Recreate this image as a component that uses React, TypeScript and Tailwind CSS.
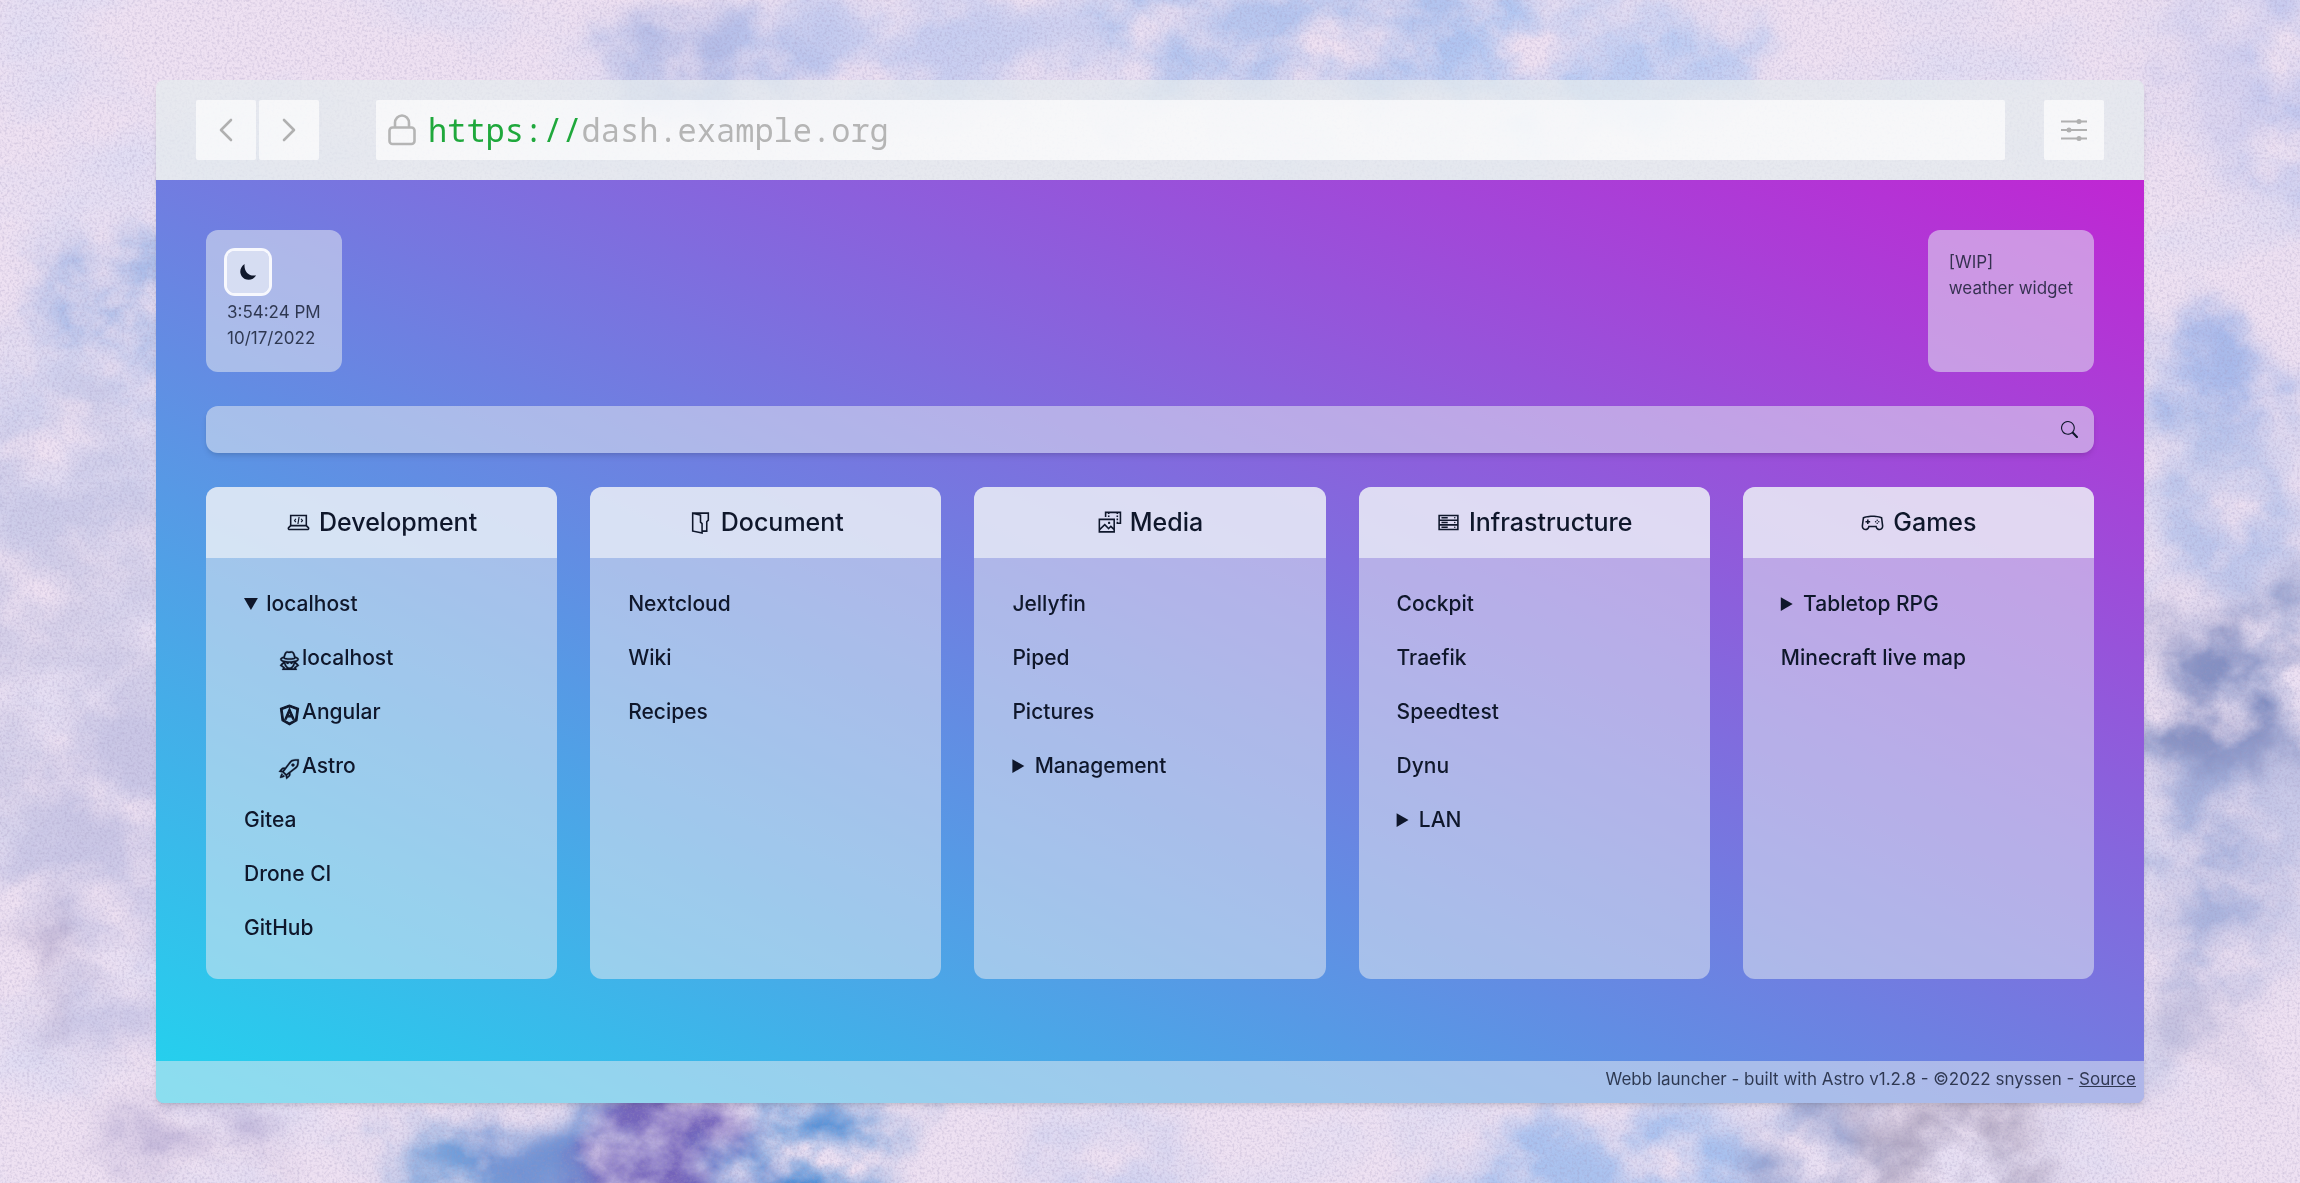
import type { ReactNode } from 'react';
import type { IconType } from 'react-icons';
import {
  LiaAngular,
  LiaFolderOpen,
  LiaGamepadSolid,
  LiaLaptopCodeSolid,
  LiaPhotoVideoSolid,
  LiaRocketSolid,
  LiaServerSolid,
  LiaUserSecretSolid,
} from 'react-icons/lia';
import { BsSearch } from 'react-icons/bs';

type Entry = { label: string; icon?: IconType; iconStroke?: number; open?: boolean; children?: Entry[] };
type Category = { title: string; icon: IconType; entries: Entry[] };

const categories: Category[] = [
  {
    title: 'Development',
    icon: LiaLaptopCodeSolid,
    entries: [
      {
        label: 'localhost',
        open: true,
        children: [
          { label: 'localhost', icon: LiaUserSecretSolid, iconStroke: 0.3 },
          { label: 'Angular', icon: LiaAngular, iconStroke: 1.4 },
          { label: 'Astro', icon: LiaRocketSolid, iconStroke: 0.3 },
        ],
      },
      { label: 'Gitea' },
      { label: 'Drone CI' },
      { label: 'GitHub' },
    ],
  },
  {
    title: 'Document',
    icon: LiaFolderOpen,
    entries: [{ label: 'Nextcloud' }, { label: 'Wiki' }, { label: 'Recipes' }],
  },
  {
    title: 'Media',
    icon: LiaPhotoVideoSolid,
    entries: [
      { label: 'Jellyfin' },
      { label: 'Piped' },
      { label: 'Pictures' },
      { label: 'Management', children: [] },
    ],
  },
  {
    title: 'Infrastructure',
    icon: LiaServerSolid,
    entries: [
      { label: 'Cockpit' },
      { label: 'Traefik' },
      { label: 'Speedtest' },
      { label: 'Dynu' },
      { label: 'LAN', children: [] },
    ],
  },
  {
    title: 'Games',
    icon: LiaGamepadSolid,
    entries: [{ label: 'Tabletop RPG', children: [] }, { label: 'Minecraft live map' }],
  },
];

/* Watercolour wallpaper: [cx, cy, rx, ry, colour, opacity] per brush stroke. */
const strokes: [number, number, number, number, string, number][] = [
  [730, 60, 110, 50, '#93a8e0', 0.65],
  [900, 50, 180, 60, '#bcc8f0', 0.7],
  [1190, 20, 110, 90, '#a6bdee', 0.75],
  [1410, 10, 130, 80, '#a4bdee', 0.8],
  [1580, 60, 180, 60, '#aec5f2', 0.8],
  [2240, 60, 90, 110, '#cbcbef', 0.6],
  [2310, 100, 50, 150, '#b9c3ee', 0.7],
  [120, 290, 60, 40, '#8fade5', 0.95],
  [145, 350, 40, 60, '#9ab4e6', 0.9],
  [70, 440, 130, 110, '#c9ceed', 0.8],
  [60, 640, 150, 240, '#cac9e6', 0.7],
  [120, 880, 100, 180, '#c4c3e4', 0.75],
  [50, 955, 24, 34, '#8d80ac', 0.8],
  [2210, 370, 60, 50, '#93aee8', 0.8],
  [2220, 500, 80, 100, '#b0bfea', 0.8],
  [2220, 700, 80, 80, '#6d7db6', 0.8],
  [2290, 640, 50, 60, '#7285be', 0.75],
  [2200, 860, 60, 120, '#97a8d8', 0.8],
  [2300, 840, 40, 140, '#b8bfe4', 0.7],
  [2180, 1030, 30, 60, '#989fca', 0.6],
  [190, 1130, 80, 30, '#998fc2', 0.7],
  [450, 1180, 70, 60, '#6a9ad8', 0.95],
  [570, 1170, 90, 80, '#7293d4', 1],
  [680, 1170, 90, 90, '#7463bb', 1],
  [810, 1170, 80, 90, '#528fd6', 1],
  [1100, 1170, 80, 50, '#bfcaf0', 0.7],
  [1640, 1170, 190, 65, '#9ebcee', 0.85],
  [1810, 1150, 60, 70, '#8f9ccc', 0.8],
  [1950, 1170, 100, 80, '#a299b5', 0.85],
];

function Wallpaper() {
  return (
    <svg
      aria-hidden="true"
      className="absolute inset-0 -z-10 size-full"
      viewBox="0 0 2300 1183"
      preserveAspectRatio="xMidYMid slice"
    >
      <defs>
        <filter
          id="brush"
          x="-200"
          y="-200"
          width="2700"
          height="1600"
          filterUnits="userSpaceOnUse"
          colorInterpolationFilters="sRGB"
        >
          <feGaussianBlur stdDeviation="24" result="soft" />
          <feTurbulence type="fractalNoise" baseFrequency="0.014" numOctaves="6" seed="7" result="n" />
          <feDisplacementMap in="soft" in2="n" scale="110" xChannelSelector="R" yChannelSelector="G" result="paint" />
          <feTurbulence type="fractalNoise" baseFrequency="0.012 0.015" numOctaves="7" seed="21" />
          <feColorMatrix values="0 0 0 0 0  0 0 0 0 0  0 0 0 0 0  2.6 0 0 0 -0.55" result="dry" />
          <feComposite in="paint" in2="dry" operator="in" />
        </filter>
        <filter id="grain" x="0" y="0" width="2300" height="1183" filterUnits="userSpaceOnUse">
          <feTurbulence type="fractalNoise" baseFrequency="0.4" numOctaves="2" seed="3" />
          <feColorMatrix values="0 0 0 0 0.35  0 0 0 0 0.3  0 0 0 0 0.5  1.8 0 0 0 -0.8" />
        </filter>
        <filter id="wash" x="0" y="0" width="2300" height="1183" filterUnits="userSpaceOnUse">
          <feTurbulence type="fractalNoise" baseFrequency="0.006 0.009" numOctaves="6" seed="11" />
          <feColorMatrix values="0 0 0 0 0.6  0 0 0 0 0.68  0 0 0 0 0.92  3 0 0 0 -1.4" />
        </filter>
      </defs>
      <rect width="2300" height="1183" fill="#eee1f2" />
      <rect width="2300" height="1183" filter="url(#wash)" opacity="0.35" />
      <g filter="url(#brush)">
        {strokes.map(([cx, cy, rx, ry, fill, opacity]) => (
          <ellipse key={`${cx}-${cy}`} cx={cx} cy={cy} rx={rx} ry={ry} fill={fill} opacity={opacity} />
        ))}
      </g>
      <rect width="2300" height="1183" filter="url(#grain)" opacity="0.45" />
    </svg>
  );
}

function Chevron({ d }: { d: string }) {
  return (
    <svg viewBox="0 0 24 24" className="size-6" fill="none" stroke="currentColor" strokeWidth="2.6">
      <path d={d} strokeLinecap="round" strokeLinejoin="round" />
    </svg>
  );
}

function ChromeButton({ label, children }: { label: string; children: ReactNode }) {
  return (
    <button
      type="button"
      aria-label={label}
      className="flex size-15 items-center justify-center rounded-xs bg-white/65 text-[#b0b0b0]"
    >
      {children}
    </button>
  );
}

function BrowserBar() {
  return (
    <header className="flex items-center bg-[#e4ebed]/75 px-10 py-5">
      <nav aria-label="History" className="mr-[57px] flex gap-[3px]">
        <ChromeButton label="Back">
          <Chevron d="M17 2 L7 12 L17 22" />
        </ChromeButton>
        <ChromeButton label="Forward">
          <Chevron d="M7 2 L17 12 L7 22" />
        </ChromeButton>
      </nav>
      <div className="flex h-15 flex-1 items-center rounded-xs bg-white/65 px-3 font-['Noto_Sans_Mono','DejaVu_Sans_Mono',monospace] text-[32px] leading-10 text-[#b5b5b5]">
        <svg viewBox="0 0 28 32" className="mr-3 h-8 w-7" fill="none" stroke="currentColor" strokeWidth="2.6">
          <rect x="1.5" y="13.5" width="25" height="16.5" rx="3" />
          <path d="M7 13.500 V9 a7 7.500 0 0 1 14 0 V13.500" />
        </svg>
        <span className="text-[#1fa83c]">https://</span>
        <span>dash.example.org</span>
      </div>
      <div className="ml-[39px]">
        <ChromeButton label="Settings">
          <svg viewBox="0 0 26 22" className="h-[22px] w-[26px]" stroke="currentColor" strokeWidth="2">
            <path d="M0 2.500H26M0 11H26M0 19.500H26" />
            <g fill="currentColor" stroke="none">
              <circle cx="18" cy="2.500" r="2.500" />
              <circle cx="8" cy="11" r="2.500" />
              <circle cx="18" cy="19.500" r="2.500" />
            </g>
          </svg>
        </ChromeButton>
      </div>
    </header>
  );
}

function MoonIcon() {
  return (
    <svg viewBox="0 0 16 16" className="size-4" fill="currentColor">
      <path d="M4.600 0 C0.300 2.800 -1 8.200 1.700 12.200 C5 17 13 17.200 16 11.300 C9.500 13 3.600 7.500 4.600 0 Z" />
    </svg>
  );
}

function EntryLink({ entry }: { entry: Entry }) {
  const Icon = entry.icon;
  return (
    <a href="#" className="flex items-center">
      {Icon && <Icon className="mt-1 size-[25px]" strokeWidth={entry.iconStroke} />}
      {entry.label}
    </a>
  );
}

function EntryItem({ entry }: { entry: Entry }) {
  if (!entry.children) {
    return (
      <li>
        <EntryLink entry={entry} />
      </li>
    );
  }
  return (
    <li>
      <details open={entry.open}>
        <summary>{entry.label}</summary>
        <ul className="pl-[33px]">
          {entry.children.map((child) => (
            <EntryItem key={child.label} entry={child} />
          ))}
        </ul>
      </details>
    </li>
  );
}

function CategoryCard({ category }: { category: Category }) {
  const Icon = category.icon;
  return (
    <section className="overflow-hidden rounded-xl bg-slate-200/55">
      <h2 className="flex items-center justify-center gap-2 bg-slate-100/65 py-5 text-[25px] leading-[31px] font-medium">
        <Icon className="size-[25px]" />
        {category.title}
      </h2>
      <ul className="px-[38px] pt-[19px] pb-6 text-[21px] leading-[54px] font-medium">
        {category.entries.map((entry) => (
          <EntryItem key={entry.label} entry={entry} />
        ))}
      </ul>
    </section>
  );
}

export default function App() {
  return (
    <div className="relative isolate flex min-h-screen flex-col overflow-hidden px-39 py-20 font-['Inter',sans-serif] text-slate-900">
      <Wallpaper />
      <div className="flex flex-1 flex-col overflow-hidden rounded-lg shadow-md">
        <BrowserBar />
        <div className="flex flex-1 flex-col bg-linear-to-tr/srgb from-[#22d3ee] to-[#c026d3]">
          <main className="flex flex-1 flex-col gap-[34px] p-[50px]">
            <div className="flex justify-between text-[17px] leading-[26px] text-slate-900/80">
              <section aria-label="Clock" className="rounded-xl bg-slate-200/55 p-[21px]">
                <button
                  type="button"
                  aria-label="Switch to dark theme"
                  className="mb-[6px] flex size-[42px] items-center justify-center rounded-lg bg-slate-100/60 text-slate-900 ring-3 ring-white/90"
                >
                  <MoonIcon />
                </button>
                <p>3:54:24 PM</p>
                <p>10/17/2022</p>
              </section>
              <section aria-label="Weather" className="rounded-xl bg-slate-200/55 px-[21px] py-[19px]">
                <p>[WIP]</p>
                <p>weather widget</p>
              </section>
            </div>
            <form role="search" className="flex h-[47px] items-center rounded-xl bg-slate-200/55 pr-4 shadow-md">
              <input type="search" aria-label="Search" className="h-full flex-1 bg-transparent px-4 outline-none" />
              <button type="submit" aria-label="Submit search">
                <BsSearch className="size-[17px]" />
              </button>
            </form>
            <div className="grid grid-cols-5 gap-[33px]">
              {categories.map((category) => (
                <CategoryCard key={category.title} category={category} />
              ))}
            </div>
          </main>
          <footer className="bg-slate-200/55 px-2 pt-[5px] pb-[11px] text-right text-[17px] leading-[26px] text-slate-900/80">
            Webb launcher - built with Astro v1.2.8 - ©2022 snyssen -{' '}
            <a href="#" className="underline">
              Source
            </a>
          </footer>
        </div>
      </div>
    </div>
  );
}
